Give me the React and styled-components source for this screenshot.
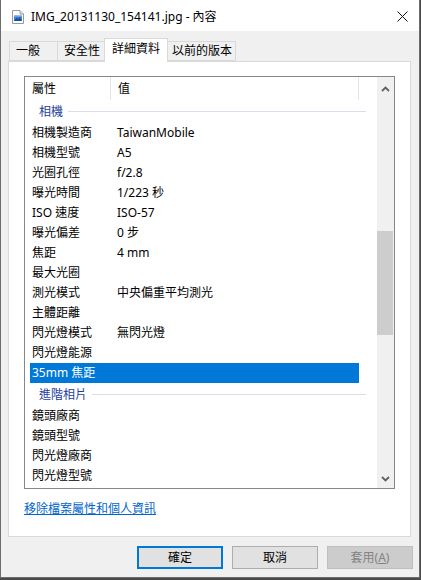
import styled, { createGlobalStyle } from 'styled-components';

const GlobalStyle = createGlobalStyle`
  html, body {
    margin: 0;
    padding: 0;
    background: #4a4a4a;
  }
  body {
    font-family: "Noto Sans", "Noto Sans CJK TC", sans-serif;
    font-size: 12px;
    color: #000;
  }
`;

// 屬性清單的資料
const rows = [
  { group: '相機' },
  { name: '相機製造商', value: 'TaiwanMobile' },
  { name: '相機型號', value: 'A5' },
  { name: '光圈孔徑', value: 'f/2.8' },
  { name: '曝光時間', value: '1/223 秒' },
  { name: 'ISO 速度', value: 'ISO-57' },
  { name: '曝光偏差', value: '0 步' },
  { name: '焦距', value: '4 mm' },
  { name: '最大光圈' },
  { name: '測光模式', value: '中央偏重平均測光' },
  { name: '主體距離' },
  { name: '閃光燈模式', value: '無閃光燈' },
  { name: '閃光燈能源' },
  { name: '35mm 焦距', selected: true },
  { group: '進階相片' },
  { name: '鏡頭廠商' },
  { name: '鏡頭型號' },
  { name: '閃光燈廠商' },
  { name: '閃光燈型號' },
];

const tabs = [
  { label: '一般', w: 49, pad: 6 },
  { label: '安全性', w: 48, pad: 6 },
  { label: '詳細資料', w: 64, pad: 7, active: true },
  { label: '以前的版本', w: 69, pad: 4 },
];

function FileIcon() {
  return (
    <svg width="12" height="14" viewBox="0 0 12 14">
      <path d="M0.5 0.5 H8 L11.5 4 V13.5 H0.5 Z" fill="#fff" stroke="#9a9a9a" />
      <path d="M8 0.5 V4 H11.5" fill="#e8e8e8" stroke="#9a9a9a" />
      <rect x="2" y="5" width="8" height="6" fill="#3f86d8" />
      <path d="M2 11 L4.5 7.5 L6 9 L7.5 7 L10 11 Z" fill="#1d4f9c" />
      <rect x="2" y="5" width="8" height="1.5" fill="#8fc0f0" />
    </svg>
  );
}

function CloseIcon() {
  return (
    <svg width="11" height="11" viewBox="0 0 11 11">
      <path d="M0.5 0.5 L10.5 10.5 M10.5 0.5 L0.5 10.5" stroke="#111" strokeWidth="1" />
    </svg>
  );
}

function Chevron({ down }) {
  return (
    <svg width="9" height="6" viewBox="0 0 9 6">
      <path
        d={down ? 'M1 1 L4.5 4.5 L8 1' : 'M1 5 L4.5 1.5 L8 5'}
        fill="none"
        stroke="#606060"
        strokeWidth="1.8"
      />
    </svg>
  );
}

export default function App() {
  return (
    <>
      <GlobalStyle />
      <Window>
        <TitleBar>
          <FileIcon />
          <TitleText>IMG_20131130_154141.jpg - 內容</TitleText>
          <CloseButton>
            <CloseIcon />
          </CloseButton>
        </TitleBar>
        <Body>
          <TabStrip>
            {tabs.map((t) => (
              <Tab key={t.label} $w={t.w} $pad={t.pad} $active={t.active}>
                {t.label}
              </Tab>
            ))}
          </TabStrip>
          <Panel>
            <ListBox>
              <ListContent>
                <HeaderRow>
                  <HeaderCell $w={86}>屬性</HeaderCell>
                  <HeaderCell $w={248}>值</HeaderCell>
                </HeaderRow>
                {rows.map((r, i) =>
                  r.group ? (
                    <GroupRow key={i}>
                      <GroupLabel>{r.group}</GroupLabel>
                      <GroupLine />
                    </GroupRow>
                  ) : (
                    <DataRow key={i} $selected={r.selected}>
                      <span>{r.name}</span>
                      <span>{r.value}</span>
                    </DataRow>
                  )
                )}
              </ListContent>
              <ScrollBar>
                <ScrollButton>
                  <Chevron />
                </ScrollButton>
                <ScrollTrack>
                  <Thumb $top={134} $height={104} />
                </ScrollTrack>
                <ScrollButton $down>
                  <Chevron down />
                </ScrollButton>
              </ScrollBar>
            </ListBox>
            <RemoveLink href="#">移除檔案屬性和個人資訊</RemoveLink>
          </Panel>
          <ButtonRow>
            <DialogButton $variant="default">確定</DialogButton>
            <DialogButton>取消</DialogButton>
            <DialogButton $variant="disabled" disabled>
              套用(<u>A</u>)
            </DialogButton>
          </ButtonRow>
        </Body>
      </Window>
    </>
  );
}

const Window = styled.div`
  width: 420px;
  height: 578px;
  box-sizing: border-box;
  border: 1px solid #6d6d6d;
  border-top: none;
  background: #f0f0f0;
  display: flex;
  flex-direction: column;
`;

const TitleBar = styled.div`
  height: 31px;
  flex: none;
  background: #fff;
  display: flex;
  align-items: center;
  padding-left: 11px;
  padding-top: 2px;
  box-sizing: border-box;
`;

const TitleText = styled.div`
  margin-left: 7px;
  line-height: 16px;
  white-space: nowrap;
`;

const CloseButton = styled.div`
  margin-left: auto;
  width: 46px;
  height: 29px;
  display: flex;
  align-items: center;
  justify-content: center;
  margin-right: -6px;
`;

const Body = styled.div`
  flex: 1;
  display: flex;
  flex-direction: column;
  padding: 0 8px 8px 7px;
  min-height: 0;
`;

const TabStrip = styled.div`
  display: flex;
  align-items: flex-end;
  height: 31px;
  margin-left: 1px;
  margin-bottom: -1px;
  position: relative;
  z-index: 1;
  flex: none;
`;

const Tab = styled.div`
  box-sizing: border-box;
  width: ${(p) => p.$w}px;
  height: ${(p) => (p.$active ? 24 : 20)}px;
  margin-bottom: ${(p) => (p.$active ? 0 : 1)}px;
  margin-left: -1px;
  &:first-child {
    margin-left: 0;
  }
  padding-left: ${(p) => p.$pad}px;
  padding-bottom: ${(p) => (p.$active ? 3 : 0)}px;
  border: 1px solid #d9d9d9;
  border-bottom: ${(p) => (p.$active ? 'none' : '1px solid #d9d9d9')};
  background: ${(p) => (p.$active ? '#fff' : '#f0f0f0')};
  display: flex;
  align-items: center;
  white-space: nowrap;
  line-height: 16px;
`;

const Panel = styled.div`
  height: 476px;
  box-sizing: border-box;
  flex: none;
  background: #fff;
  border: 1px solid #d9d9d9;
  padding: 14px 15px 0 15px;
  display: flex;
  flex-direction: column;
`;

const ListBox = styled.div`
  height: 413px;
  box-sizing: border-box;
  border: 1px solid #828790;
  display: flex;
  overflow: hidden;
`;

const ListContent = styled.div`
  flex: 1;
  overflow: hidden;
`;

const HeaderRow = styled.div`
  height: 23px;
  display: flex;
`;

const HeaderCell = styled.div`
  width: ${(p) => p.$w}px;
  box-sizing: border-box;
  padding-left: 7px;
  border-right: 1px solid #e5e5e5;
  display: flex;
  align-items: center;
  line-height: 16px;
`;

const GroupRow = styled.div`
  height: 23px;
  display: flex;
  align-items: center;
  padding-left: 14px;
  padding-right: 11px;
`;

const GroupLabel = styled.span`
  color: #1f3d9c;
  line-height: 16px;
`;

const GroupLine = styled.div`
  flex: 1;
  height: 1px;
  background: #dadeec;
  margin-left: 5px;
`;

const DataRow = styled.div`
  height: 20px;
  margin-left: 5px;
  width: 329px;
  box-sizing: border-box;
  padding-left: 2px;
  display: grid;
  grid-template-columns: 85px 1fr;
  align-items: center;
  line-height: 16px;
  white-space: nowrap;
  background: ${(p) => (p.$selected ? '#0078d7' : 'transparent')};
  color: ${(p) => (p.$selected ? '#fff' : '#000')};
`;

const ScrollBar = styled.div`
  width: 17px;
  flex: none;
  background: #f0f0f0;
  display: flex;
  flex-direction: column;
`;

const ScrollButton = styled.div`
  height: 17px;
  flex: none;
  display: flex;
  align-items: center;
  justify-content: center;
  padding-top: ${(p) => (p.$down ? 0 : 3)}px;
  padding-bottom: ${(p) => (p.$down ? 1 : 0)}px;
`;

const ScrollTrack = styled.div`
  flex: 1;
`;

const Thumb = styled.div`
  margin: ${(p) => p.$top}px 1px 0 0;
  height: ${(p) => p.$height}px;
  background: #cdcdcd;
`;

const RemoveLink = styled.a`
  margin-top: 12px;
  align-self: flex-start;
  color: #0066cc;
  text-decoration: underline;
  line-height: 16px;
`;

const ButtonRow = styled.div`
  display: flex;
  justify-content: flex-end;
  gap: 9px;
  margin-top: 9px;
  margin-right: -2px;
`;

const DialogButton = styled.button`
  width: 86px;
  height: 23px;
  box-sizing: border-box;
  font: inherit;
  line-height: 16px;
  padding: 0;
  background: ${(p) => (p.$variant === 'disabled' ? '#cccccc' : '#e1e1e1')};
  color: ${(p) => (p.$variant === 'disabled' ? '#838383' : '#000')};
  border: ${(p) =>
    p.$variant === 'default'
      ? '2px solid #0078d7'
      : p.$variant === 'disabled'
      ? '1px solid #bfbfbf'
      : '1px solid #adadad'};
`;
